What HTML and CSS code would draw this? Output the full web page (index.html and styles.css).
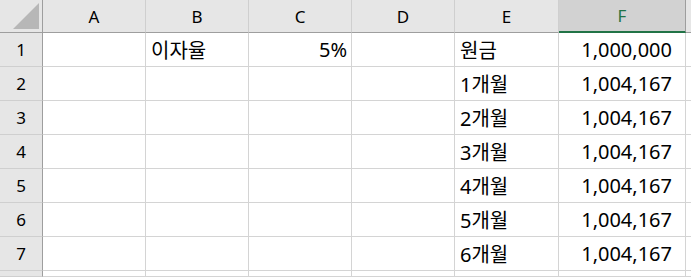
FILE: index.html
```html
<!DOCTYPE html>
<html lang="ko">
<head>
  <meta charset="UTF-8" />
  <title>이자 계산</title>
  <link rel="stylesheet" href="styles.css">
</head>
<body>
  <div class="sheet">
    <div class="corner"><span class="tri"></span></div>
    <div class="col-head">A</div>
    <div class="col-head">B</div>
    <div class="col-head">C</div>
    <div class="col-head">D</div>
    <div class="col-head">E</div>
    <div class="col-head active">F</div>
    <div class="col-head"></div>

    <div class="row-head">1</div>
    <div class="cell"></div>
    <div class="cell">이자율</div>
    <div class="cell num">5%</div>
    <div class="cell"></div>
    <div class="cell">원금</div>
    <div class="cell num money">1,000,000</div>
    <div class="cell"></div>

    <div class="row-head">2</div>
    <div class="cell"></div><div class="cell"></div><div class="cell"></div><div class="cell"></div>
    <div class="cell">1개월</div>
    <div class="cell num money">1,004,167</div>
    <div class="cell"></div>

    <div class="row-head">3</div>
    <div class="cell"></div><div class="cell"></div><div class="cell"></div><div class="cell"></div>
    <div class="cell">2개월</div>
    <div class="cell num money">1,004,167</div>
    <div class="cell"></div>

    <div class="row-head">4</div>
    <div class="cell"></div><div class="cell"></div><div class="cell"></div><div class="cell"></div>
    <div class="cell">3개월</div>
    <div class="cell num money">1,004,167</div>
    <div class="cell"></div>

    <div class="row-head">5</div>
    <div class="cell"></div><div class="cell"></div><div class="cell"></div><div class="cell"></div>
    <div class="cell">4개월</div>
    <div class="cell num money">1,004,167</div>
    <div class="cell"></div>

    <div class="row-head">6</div>
    <div class="cell"></div><div class="cell"></div><div class="cell"></div><div class="cell"></div>
    <div class="cell">5개월</div>
    <div class="cell num money">1,004,167</div>
    <div class="cell"></div>

    <div class="row-head">7</div>
    <div class="cell"></div><div class="cell"></div><div class="cell"></div><div class="cell"></div>
    <div class="cell">6개월</div>
    <div class="cell num money">1,004,167</div>
    <div class="cell"></div>

    <div class="row-head"></div>
    <div class="cell"></div><div class="cell"></div><div class="cell"></div><div class="cell"></div>
    <div class="cell"></div><div class="cell"></div><div class="cell"></div>
  </div>
</body>
</html>
```

FILE: styles.css
```css
body {
  margin: 0;
  padding: 0;
  background: #fff;
  font-family: "Noto Sans", "Noto Sans CJK KR", sans-serif;
  color: #000;
  overflow: hidden;
}

.sheet {
  display: grid;
  grid-template-columns: 43px 103px 103px 103px 103px 104px 127px 1fr;
  grid-template-rows: 33px repeat(7, 34px) 6px;
  width: 691px;
  height: 277px;
  overflow: hidden;
}

.sheet > div {
  box-sizing: border-box;
  border-right: 1px solid #d4d4d4;
  border-bottom: 1px solid #d4d4d4;
}

.corner {
  background: #e6e6e6;
  position: relative;
  border-right-color: #9e9e9e !important;
  border-bottom-color: #9e9e9e !important;
}

.tri {
  position: absolute;
  left: 13px;
  top: 3px;
  width: 0;
  height: 0;
  border-left: 26px solid transparent;
  border-bottom: 26px solid #b7b7b7;
}

.col-head {
  background: #e6e6e6;
  border-bottom-color: #9e9e9e !important;
  border-right-color: #cfcfcf !important;
  font-size: 17px;
  display: flex;
  align-items: center;
  justify-content: center;
}

.col-head.active {
  background: #d2d2d2;
  color: #217346;
  border-bottom: 2px solid #217346 !important;
  border-right-color: #9e9e9e !important;
}

.row-head {
  background: #e6e6e6;
  border-right-color: #9e9e9e !important;
  border-bottom-color: #cfcfcf !important;
  font-size: 17px;
  display: flex;
  align-items: center;
  justify-content: center;
}

.cell {
  font-size: 20px;
  display: flex;
  align-items: center;
  padding: 0 5px;
  white-space: nowrap;
}

.cell.num {
  justify-content: flex-end;
  padding-right: 4px;
}

.cell.money {
  padding-right: 13px;
}
```
